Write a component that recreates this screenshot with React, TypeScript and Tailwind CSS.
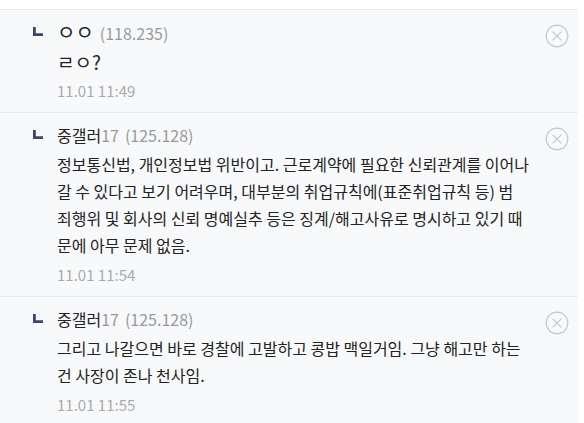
import { Fragment } from "react";

type Reply = {
  nick: string;
  tag?: string;
  ip: string;
  lines: string[];
  date: string;
  jamo?: boolean;
};

const replies: Reply[] = [
  { nick: "ㅇㅇ", ip: "(118.235)", lines: ["ㄹㅇ?"], date: "11.01 11:49", jamo: true },
  {
    nick: "중갤러",
    tag: "17",
    ip: "(125.128)",
    lines: [
      "정보통신법, 개인정보법 위반이고. 근로계약에 필요한 신뢰관계를 이어나",
      "갈 수 있다고 보기 어려우며, 대부분의 취업규칙에(표준취업규칙 등) 범",
      "죄행위 및 회사의 신뢰 명예실추 등은 징계/해고사유로 명시하고 있기 때",
      "문에 아무 문제 없음.",
    ],
    date: "11.01 11:54",
  },
  {
    nick: "중갤러",
    tag: "17",
    ip: "(125.128)",
    lines: [
      "그리고 나갈으면 바로 경찰에 고발하고 콩밥 맥일거임. 그냥 해고만 하는",
      "건 사장이 존나 천사임.",
    ],
    date: "11.01 11:55",
  },
];

function ReplyMark() {
  return (
    <svg width="10" height="9" viewBox="0 0 10 9" className="mt-[6px]">
      <path d="M0 0h2.8v6.2H10V9H0z" fill="#3d4472" />
    </svg>
  );
}

function CloseIcon() {
  return (
    <svg width="24" height="24" viewBox="0 0 24 24" fill="none" stroke="#c6c7cc" strokeWidth="1.2">
      <circle cx="12" cy="12" r="10.8" />
      <path d="M7.6 7.6l8.8 8.8M16.4 7.6l-8.8 8.8" />
    </svg>
  );
}

export default function App() {
  return (
    <div
      className="w-[584px] h-[423px] overflow-hidden bg-white pt-[9px]"
      style={{ fontFamily: '"Noto Sans CJK KR", "Noto Sans", sans-serif' }}
    >
      <div className="w-[578px] bg-[#f8f9fb]">
        {replies.map((r, i) => (
          <div key={i} className="relative flex border-t border-[#e8e9ee] pl-[33px] pt-[11px] pb-[8px]">
            <div className="w-[24px] shrink-0">
              <ReplyMark />
            </div>
            <div className="flex-1">
              <div className="flex items-baseline h-[22px] leading-[22px]">
                <span className={r.jamo ? "text-[20px] text-[#222]" : "text-[16px] text-[#222]"}>{r.nick}</span>
                {r.tag && <span className="text-[16px] text-[#999]">{r.tag}</span>}
                <span className="ml-[6px] text-[16px] text-[#999]">{r.ip}</span>
              </div>
              <p
                className={
                  r.jamo
                    ? "mt-[5px] text-[19px] leading-[27px] text-[#222] whitespace-nowrap"
                    : "mt-[5px] text-[16px] leading-[27px] text-[#222] whitespace-nowrap"
                }
              >
                {r.lines.map((l, j) => (
                  <Fragment key={j}>
                    {l}
                    {j < r.lines.length - 1 && <br />}
                  </Fragment>
                ))}
              </p>
              <div className="mt-[2px] text-[15px] leading-[27px] text-[#aaa]">{r.date}</div>
            </div>
            <div className="absolute right-[9px] top-[14px]">
              <CloseIcon />
            </div>
          </div>
        ))}
      </div>
    </div>
  );
}
